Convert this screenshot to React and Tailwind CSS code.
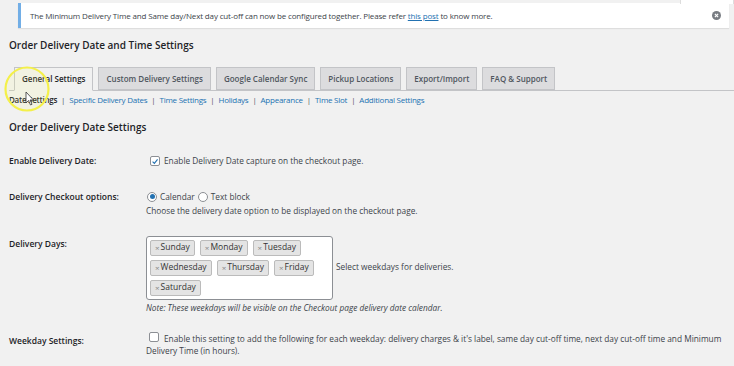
import React from "react";

const tabs = [
  {name: "General Settings", active: true},
  {name: "Custom Delivery Settings"},
  {name: "Google Calendar Sync"},
  {name: "Pickup Locations"},
  {name: "Export/Import"},
  {name: "FAQ & Support"},
]

const subLinks = ["Specific Delivery Dates", "Time Settings", "Holidays", "Appearance", "Time Slot", "Additional Settings"]

const dayRows = [
  ["Sunday", "Monday", "Tuesday"],
  ["Wednesday", "Thursday", "Friday"],
  ["Saturday"],
]

const font = {fontFamily: '"Open Sans", "Noto Sans", sans-serif'}

/**
 * Single weekday chip inside the select box.
 */
const DayTag = ({name}) => (
  <span className="inline-flex items-center h-[16px] px-[4px] rounded-[2px] border border-[#bbb] bg-[#e4e4e4] text-[#333] text-[8.5px] leading-none">
    <span className="text-[#888] mr-[1px] text-[8px]">×</span>{name}
  </span>
)

const Checkbox = ({checked}) => (
  <span className="inline-flex items-center justify-center w-[10px] h-[10px] rounded-[2px] border border-[#8c8f94] bg-white shrink-0">
    {checked && (
      <svg viewBox="0 0 10 10" className="w-[9px] h-[9px]">
        <path d="M2 5.2 L4.2 7.4 L8.2 2.4" fill="none" stroke="#2271b1" strokeWidth="1.4"/>
      </svg>
    )}
  </span>
)

const Radio = ({checked}) => (
  <span className="inline-flex items-center justify-center w-[10px] h-[10px] rounded-full border border-[#8c8f94] bg-white shrink-0">
    {checked && <span className="w-[5px] h-[5px] rounded-full bg-[#2271b1]"/>}
  </span>
)

const Row = ({label, className, labelClass = "", children}) => (
  <div className={"flex " + className}>
    <div className={"w-[137px] shrink-0 font-semibold text-[8.5px] text-[#1d2327] " + labelClass}>{label}</div>
    <div className="flex-1 text-[8.3px] text-[#3c434a]">{children}</div>
  </div>
)

const App = () => (
  <div className="relative w-[734px] h-[366px] overflow-hidden bg-[#f1f1f1] text-[#3c434a]" style={font}>

    {/* screen options tab */}
    <div className="absolute right-0 top-0 w-[54px] h-[4px] bg-white border-x border-[#ddd]"/>

    {/* notice */}
    <div className="ml-[18px] mr-[5px] mt-[3px] h-[25px] flex items-center bg-white border-l-[3px] border-[#72aee6] shadow-[0_1px_1px_rgba(0,0,0,0.08)] pl-[9px] pr-[8px]">
      <p className="flex-1 text-[8px] tracking-[-0.15px] text-[#3c434a]">
        The Minimum Delivery Time and Same day/Next day cut-off can now be configured together. Please refer <span className="text-[#2271b1] underline">this post</span> to know more.
      </p>
      <svg viewBox="0 0 10 10" className="w-[9px] h-[9px]">
        <circle cx="5" cy="5" r="5" fill="#787c82"/>
        <path d="M3.2 3.2 L6.8 6.8 M6.8 3.2 L3.2 6.8" stroke="white" strokeWidth="1.3"/>
      </svg>
    </div>

    {/* page title */}
    <h1 className="ml-[9px] mt-[9px] text-[10px] font-semibold text-[#1d2327] leading-[16px]">
      Order Delivery Date and Time Settings
    </h1>

    {/* tabs */}
    <div className="mt-[14px] ml-[9px] flex items-end gap-[5px] pl-[5px] border-b border-[#c3c4c7] h-[24px]">
      {tabs.map(({name, active}) => (
        <div key={name}
             className={"h-[23px] px-[7px] flex items-center text-[8px] font-semibold border border-[#c3c4c7] " +
               (active ? "bg-[#f1f1f1] border-b-[#f1f1f1] -mb-px h-[24px] text-[#1d2327]" : "bg-[#dcdcde] text-[#50575e]")}>
          {name}
        </div>
      ))}
    </div>

    {/* sub links */}
    <div className="ml-[9px] mt-[3px] flex items-center text-[8px] tracking-[-0.25px] text-[#50575e] leading-[12px]">
      <span className="font-semibold text-[#1d2327]">Date Settings</span>
      {subLinks.map(name => (
        <span key={name}>
          <span className="mx-[4px]">|</span>
          <span className="text-[#2271b1]">{name}</span>
        </span>
      ))}
    </div>

    <h2 className="ml-[9px] mt-[14px] text-[10px] font-semibold text-[#1d2327] leading-[14px]">
      Order Delivery Date Settings
    </h2>

    <div className="ml-[9px] mr-[9px]">
      <Row label="Enable Delivery Date:" className="mt-[21px] items-center">
        <label className="flex items-center gap-[4px] ml-[4px]">
          <Checkbox checked/>
          Enable Delivery Date capture on the checkout page.
        </label>
      </Row>

      <Row label="Delivery Checkout options:" className="mt-[23px]">
        <div className="flex items-center gap-[3px] ml-[1px]">
          <Radio checked/> Calendar <Radio/> Text block
        </div>
        <div className="mt-[2px]">Choose the delivery date option to be displayed on the checkout page.</div>
      </Row>

      <Row label="Delivery Days:" className="mt-[18px]" labelClass="pt-[2px]">
        <div className="flex items-center gap-[3px]">
          <div className="w-[187px] h-[64px] bg-white border border-[#8c8f94] rounded-[3px] px-[3px] pt-[3px] flex flex-col gap-[4px]">
            {dayRows.map((row, i) => (
              <div key={i} className="flex gap-[5px]">
                {row.map(day => <DayTag key={day} name={day}/>)}
              </div>
            ))}
          </div>
          <span>Select weekdays for deliveries.</span>
        </div>
        <div className="mt-[2px] italic">Note: These weekdays will be visible on the Checkout page delivery date calendar.</div>
      </Row>

      <Row label="Weekday Settings:" className="mt-[19px]" labelClass="pt-[2px]">
        <div className="leading-[12px]">
          <span className="inline-block align-middle ml-[3px] mr-[5px] -mt-[2px]"><Checkbox/></span>
          Enable this setting to add the following for each weekday: delivery charges &amp; it's label, same day cut-off time, next day cut-off time and Minimum Delivery Time (in hours).
        </div>
      </Row>
    </div>

    {/* cursor highlight */}
    <svg className="absolute left-[3px] top-[65px] w-[48px] h-[48px]" viewBox="0 0 48 48">
      <circle cx="24" cy="24" r="21.5" fill="rgba(255,255,120,0.12)" stroke="#f4f04a" strokeWidth="2.2"/>
      <path d="M23 27 L23 38 L25.5 35.5 L27.5 40 L29 39.3 L27 35 L30.5 35 Z" fill="white" stroke="#333" strokeWidth="0.8"/>
    </svg>
  </div>
)

export default App
